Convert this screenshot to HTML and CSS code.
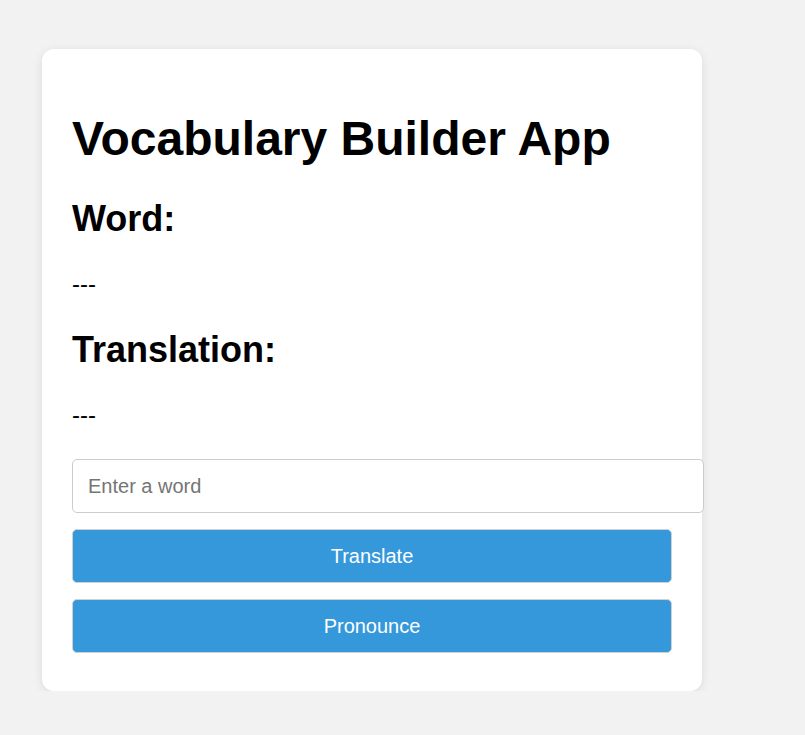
FILE: index.html
```html
<!DOCTYPE html>
<html lang="en">
<head>
<meta charset="utf-8">
<title>Vocabulary Builder App</title>
<link rel="stylesheet" href="styles.css">
</head>
<body>
<div class="card">
  <h1 class="title">Vocabulary Builder App</h1>
  <h2 class="label">Word:</h2>
  <p class="value">---</p>
  <h2 class="label">Translation:</h2>
  <p class="value">---</p>
  <input class="word-input" type="text" placeholder="Enter a word">
  <button class="btn" type="button">Translate</button>
  <button class="btn" type="button">Pronounce</button>
</div>
</body>
</html>
```

FILE: styles.css
```css
html, body {
  margin: 0;
  padding: 0;
}
body {
  background: #f2f2f2;
  font-family: "Liberation Sans", Arial, sans-serif;
  color: #000;
  padding: 49px 0 0 42px;
}
.card {
  width: 600px;
  background: #fff;
  padding: 30px 30px 30px 30px;
  border-radius: 12px;
  box-shadow: 0 2px 10px rgba(0, 0, 0, 0.1);
  display: flow-root;
}
.title {
  font-size: 48px;
  font-weight: bold;
  line-height: 55px;
  margin: 32px 0 32px;
}
.label {
  font-size: 36px;
  font-weight: bold;
  line-height: 41px;
  margin: 30px 0 30px;
}
.value {
  font-size: 24px;
  line-height: 30px;
  margin: 24px 0 24px;
}
.word-input {
  display: block;
  box-sizing: content-box;
  width: 100%;
  height: 22px;
  margin: 29px 0 16px;
  padding: 15px;
  border: 1px solid #ccc;
  border-radius: 5px;
  font-family: "Liberation Sans", Arial, sans-serif;
  font-size: 20px;
  color: #000;
  background: #fff;
  outline: none;
}
.word-input::placeholder {
  color: #757575;
}
.btn {
  display: block;
  box-sizing: border-box;
  width: 100%;
  height: 54px;
  margin: 0 0 16px;
  padding: 0;
  border: 1px solid #d0d0d0;
  border-radius: 5px;
  background: #3498db;
  color: #fff;
  font-family: "Liberation Sans", Arial, sans-serif;
  font-size: 20px;
  cursor: pointer;
}
.btn:last-child {
  margin-bottom: 8px;
}
```
